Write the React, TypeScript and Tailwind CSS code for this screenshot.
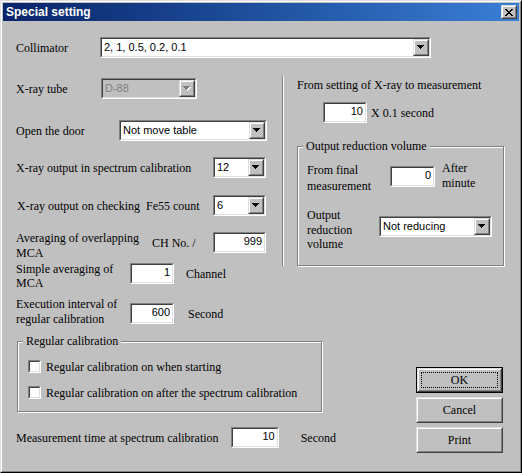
import React from 'react';

type Box = { className?: string; children?: React.ReactNode };

const sans = "font-['Liberation_Sans',Arial,sans-serif] text-[11px]";

const Raised = ({ className = '', children }: Box) => (
  <div className={`border border-t-[#dfdfdf] border-l-[#dfdfdf] border-b-[#404040] border-r-[#404040] bg-[#c0c0c0] ${className}`}>
    <div className="w-full h-full border border-t-white border-l-white border-b-[#808080] border-r-[#808080] flex items-center justify-center">
      {children}
    </div>
  </div>
);

const Sunken = ({ className = '', children, disabled }: Box & { disabled?: boolean }) => (
  <div className={`border border-t-[#808080] border-l-[#808080] border-b-white border-r-white ${className}`}>
    <div
      className={`w-full h-full border border-t-[#404040] border-l-[#404040] border-b-[#dfdfdf] border-r-[#dfdfdf] flex items-center ${
        disabled ? 'bg-[#c0c0c0]' : 'bg-white'
      }`}
    >
      {children}
    </div>
  </div>
);

const Arrow = ({ disabled }: { disabled?: boolean }) => (
  <svg width="8" height="5" viewBox="0 0 8 5">
    {disabled && <path d="M1 1h7v1H1zM2 2h5v1H2zM3 3h3v1H3zM4 4h1v1H4z" fill="#fff" />}
    <path d="M0 0h7v1H0zM1 1h5v1H1zM2 2h3v1H2zM3 3h1v1H3z" fill={disabled ? '#808080' : '#000'} />
  </svg>
);

const Combo = ({ value, className = '', disabled }: { value: string; className?: string; disabled?: boolean }) => (
  <Sunken className={`h-[21px] ${className}`} disabled={disabled}>
    <span className={`flex-1 pl-[2px] pb-px ${sans} ${disabled ? 'text-[#808080]' : 'text-black'}`}>{value}</span>
    <Raised className="w-[16px] h-full">
      <Arrow disabled={disabled} />
    </Raised>
  </Sunken>
);

const Field = ({ value, className = '' }: { value: string; className?: string }) => (
  <Sunken className={`h-[21px] ${className}`}>
    <span className={`flex-1 text-right pr-[2px] pb-[2px] ${sans}`}>{value}</span>
  </Sunken>
);

const Check = () => <Sunken className="w-[13px] h-[13px]" />;

const Group = ({ title, className = '', children }: Box & { title: string }) => (
  <div className={`relative border border-[#808080] shadow-[inset_1px_1px_0_#fff,1px_1px_0_#fff] ${className}`}>
    <span className="absolute -top-[8px] left-[5px] px-[3px] bg-[#c0c0c0] leading-[15px]">{title}</span>
    {children}
  </div>
);

const CloseGlyph = () => (
  <svg width="8" height="7" viewBox="0 0 8 7">
    <path
      d="M0 0h2v1H0zM6 0h2v1H6zM1 1h2v1H1zM5 1h2v1H5zM2 2h4v1H2zM3 3h2v1H3zM2 4h4v1H2zM1 5h2v1H1zM5 5h2v1H5zM0 6h2v1H0zM6 6h2v1H6z"
      fill="#000"
    />
  </svg>
);

export default function App() {
  return (
    <div className="w-[522px] h-[473px] bg-[#c0c0c0] border border-t-[#dfdfdf] border-l-[#dfdfdf] border-b-black border-r-black font-['Liberation_Serif','Times_New_Roman',serif] text-[12px] text-black">
      <div className="h-full border border-t-white border-l-white border-b-[#808080] border-r-[#808080] p-px flex flex-col">
        {/* title bar */}
        <div className="h-[18px] flex items-center justify-between pl-[3px] pr-[2px] bg-linear-to-r from-[#0a246a] to-[#3a7fd6]">
          <span className="font-['Liberation_Sans',Arial,sans-serif] font-bold text-[12px] text-white">Special setting</span>
          <Raised className="w-[16px] h-[14px]">
            <CloseGlyph />
          </Raised>
        </div>

        <div className="pl-[13px] pt-[16px]">
          <div className="flex items-center h-[21px]">
            <span className="w-[84px]">Collimator</span>
            <Combo className="w-[331px]" value="2, 1, 0.5, 0.2, 0.1" />
          </div>

          <div className="flex mt-[20px]">
            {/* left column */}
            <div className="w-[251px] flex flex-col">
              <div className="flex items-center h-[21px]">
                <span className="w-[85px]">X-ray tube</span>
                <Combo className="w-[96px]" value="D-88" disabled />
              </div>
              <div className="flex items-center h-[21px] mt-[21px]">
                <span className="w-[103px]">Open the door</span>
                <Combo className="w-[148px]" value="Not move table" />
              </div>
              <div className="flex items-center h-[21px] mt-[16px]">
                <span className="w-[197px]">X-ray output in spectrum calibration</span>
                <Combo className="w-[53px]" value="12" />
              </div>
              <div className="flex items-center h-[21px] mt-[17px]">
                <span className="w-[197px] pl-px">X-ray output on checking&nbsp; Fe55 count</span>
                <Combo className="w-[53px]" value="6" />
              </div>
              <div className="flex items-start h-[21px] mt-[16px]">
                <span className="w-[136px] leading-[15px] -mt-px">
                  Averaging of overlapping
                  <br />
                  MCA
                </span>
                <span className="w-[61px] self-center">CH No. /</span>
                <Field className="w-[53px]" value="999" />
              </div>
              <div className="flex items-start h-[21px] mt-[10px]">
                <span className="w-[114px] leading-[14px] -mt-px">
                  Simple averaging of
                  <br />
                  MCA
                </span>
                <Field className="w-[44px]" value="1" />
                <span className="ml-[12px] self-center">Channel</span>
              </div>
              <div className="flex items-start h-[21px] mt-[19px]">
                <span className="w-[114px] leading-[15px] -mt-[6px]">
                  Execution interval of
                  <br />
                  regular calibration
                </span>
                <Field className="w-[44px]" value="600" />
                <span className="ml-[14px] self-center">Second</span>
              </div>
            </div>

            {/* separator */}
            <div className="ml-[15px] -mt-[2px] h-[190px] w-[2px] border-l border-l-[#808080] border-r border-r-white" />

            {/* right column */}
            <div className="ml-[13px] w-[207px] flex flex-col">
              <span className="leading-[15px]">From setting of X-ray to measurement</span>
              <div className="flex items-center mt-[9px] pl-[26px]">
                <Field className="w-[44px]" value="10" />
                <span className="ml-[4px]">X 0.1 second</span>
              </div>
              <Group title="Output reduction volume" className="mt-[23px] h-[120px] pl-[9px] pt-[19px]">
                <div className="flex items-start h-[21px]">
                  <span className="w-[83px] leading-[16px] -mt-[4px]">
                    From final
                    <br />
                    measurement
                  </span>
                  <Field className="w-[45px]" value="0" />
                  <span className="ml-[7px] leading-[15px] -mt-[5px]">
                    After
                    <br />
                    minute
                  </span>
                </div>
                <div className="flex items-start h-[21px] mt-[29px]">
                  <span className="w-[72px] leading-[14.5px] -mt-[8px]">
                    Output
                    <br />
                    reduction
                    <br />
                    volume
                  </span>
                  <Combo className="w-[113px]" value="Not reducing" />
                </div>
              </Group>
            </div>
          </div>

          <div className="flex mt-[17px]">
            <div className="w-[320px] flex flex-col">
              <Group title="Regular calibration" className="ml-px w-[305px] h-[71px] pl-[10px] pt-[18px]">
                <div className="flex flex-col gap-[13px]">
                  <div className="flex items-center h-[13px]">
                    <Check />
                    <span className="ml-[5px]">Regular calibration on when starting</span>
                  </div>
                  <div className="flex items-center h-[13px]">
                    <Check />
                    <span className="ml-[5px]">Regular calibration on after the spectrum calibration</span>
                  </div>
                </div>
              </Group>
              <div className="flex items-center h-[21px] mt-[15px]">
                <span className="w-[216px]">Measurement time at spectrum calibration</span>
                <Field className="w-[48px]" value="10" />
                <span className="ml-[22px]">Second</span>
              </div>
            </div>

            <div className="ml-[80px] mt-[26px] flex flex-col gap-[4px]">
              <div className="w-[87px] h-[26px] border border-black">
                <Raised className="w-full h-full">
                  <div className="w-[calc(100%-4px)] h-[calc(100%-4px)] border border-dotted border-black flex items-center justify-center">
                    OK
                  </div>
                </Raised>
              </div>
              <Raised className="w-[87px] h-[26px]">Cancel</Raised>
              <Raised className="w-[87px] h-[26px]">Print</Raised>
            </div>
          </div>
        </div>
      </div>
    </div>
  );
}
